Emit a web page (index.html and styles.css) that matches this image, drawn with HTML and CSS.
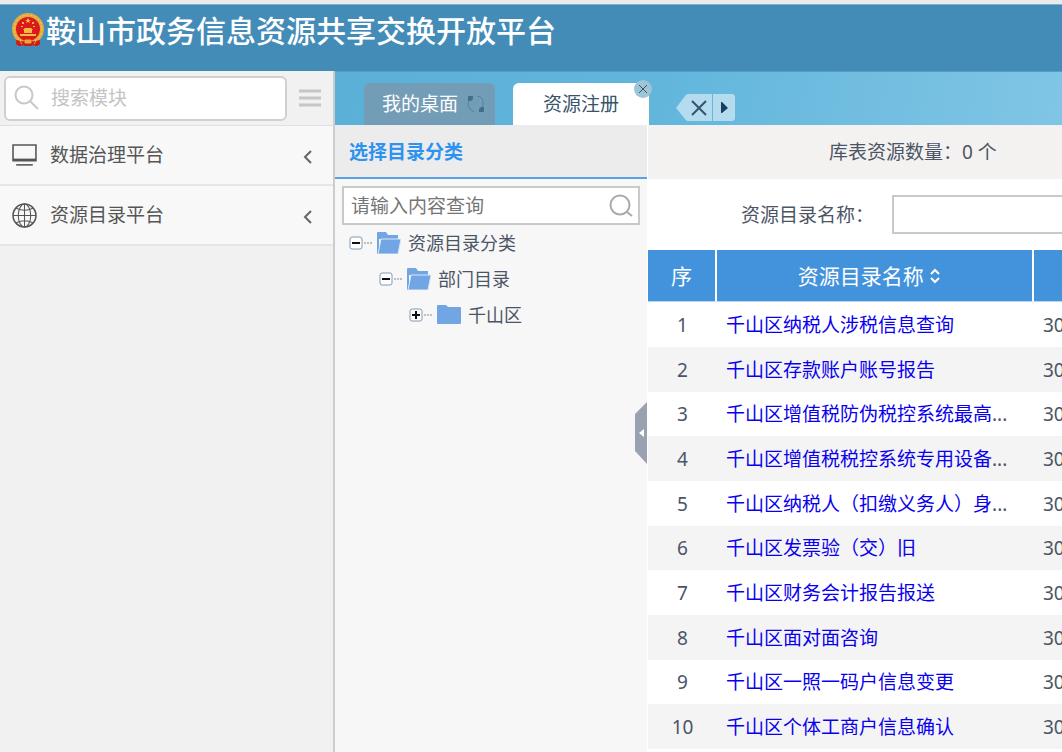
FILE: index.html
```html
<!DOCTYPE html>
<html lang="zh-CN">
<head>
<meta charset="utf-8">
<meta name="viewport" content="width=device-width, initial-scale=1">
<title>鞍山市政务信息资源共享交换开放平台</title>
<link rel="stylesheet" href="styles.css">
</head>
<body>
<div class="app">
  <header class="header">
    <svg class="emblem" viewBox="0 0 34 35" aria-hidden="true">
      <path d="M5 24h24v7l-3 2-4-1-2 1h-6l-2-1-4 1-3-2z" fill="#d3221c"/>
      <circle cx="17" cy="16" r="14" fill="#dc1a1c" stroke="#e3a93c" stroke-width="4"/>
      <circle cx="17" cy="16" r="14" fill="none" stroke="#f2cf6a" stroke-width="1" stroke-dasharray="2 2"/>
      <path d="M17 5l1 2h2l-2 1 1 2-2-1-2 1 1-2-2-1h2zM11 9h2v2h-2zM21 9h2v2h-2zM10 13h2v1h-2zM22 13h2v1h-2zM12 17l2-2h6l2 2zM13 17h8v3h-8zM9 21h16v2H9z" fill="#f3bd43"/>
      <path d="M6 27q5 2 8 1l3-2 3 2q3 1 8-1l1 4-3 2-4-1-2 1h-6l-2-1-4 1-3-2z" fill="#cf1b1d"/>
      <path d="M14 27h6v3h-6zM9 28l2 3M25 28l-2 3" fill="#e7a736" stroke="#e7a736"/>
    </svg>
    <h1 class="title">鞍山市政务信息资源共享交换开放平台</h1>
  </header>
  <div class="body">
    <aside class="sidebar">
      <div class="module-search">
        <label class="module-box">
          <svg class="module-icon" viewBox="0 0 26 26" aria-hidden="true"><circle cx="10" cy="10" r="8.500"/><path d="M16 16l8 8"/></svg>
          <input class="module-input" type="text" placeholder="搜索模块" aria-label="搜索模块">
        </label>
        <button class="menu-toggle" type="button" aria-label="折叠菜单"><svg class="menu-icon" viewBox="0 0 22 18"><path d="M0 2h22M0 9h22M0 16h22"/></svg></button>
      </div>
      <nav class="modules">
        <a class="module" href="#"><svg class="module-glyph" viewBox="0 0 24 24"><path d="M1 2h22v15H1z" stroke-width="1.500"/><path d="M1 16h22"/><path d="M4 21h16" stroke-width="1.500"/></svg><span class="module-name">数据治理平台</span><svg class="chevron" viewBox="0 0 10 14"><path d="M8 1L2 7l6 6"/></svg></a>
        <a class="module" href="#"><svg class="module-glyph thin" viewBox="0 0 24 24"><circle cx="12" cy="12" r="11" stroke-width="1.500"/><ellipse cx="12" cy="12" rx="6" ry="11"/><path d="M1 12h22M12 1v22M4 5q8 4 16 0M4 19q8-4 16 0"/></svg><span class="module-name">资源目录平台</span><svg class="chevron" viewBox="0 0 10 14"><path d="M8 1L2 7l6 6"/></svg></a>
      </nav>
    </aside>
    <main class="main">
      <div class="tabs">
        <button class="tab" type="button">我的桌面
          <svg class="refresh" viewBox="0 0 18 18" aria-hidden="true"><path d="M3 4Q-1 9 3 14l4 3M10 1q6 1 6 6v3q0 2-2 4"/><path class="solid" d="M1 1h5v3L4 6H1zM17 17h-5v-3l2-2h3z"/></svg>
        </button>
        <div class="tab-wrap">
          <button class="tab active" type="button">资源注册</button>
          <button class="tab-close" type="button" aria-label="关闭资源注册"><svg viewBox="0 0 18 18"><circle cx="9" cy="9" r="9"/><path d="M5 5l8 8M13 5l-8 8"/></svg></button>
        </div>
        <div class="tab-tools">
          <button class="tool close-all" type="button" aria-label="关闭全部"><svg viewBox="0 0 36 27"><path class="face" d="M0 14L9 2q1-2 3-2h24v27H12q-2 0-3-2z"/><path class="line" d="M16 7l14 14M30 7L16 21"/></svg></button>
          <button class="tool next" type="button" aria-label="下一个"><svg viewBox="0 0 22 27"><path class="face" d="M0 0h20l2 2v23l-2 2H0z"/><path class="arrow" d="M8 8h1l6 6-6 5H8z"/></svg></button>
        </div>
      </div>
      <div class="content">
        <section class="tree-panel">
          <h2 class="tree-title">选择目录分类</h2>
          <label class="tree-search">
            <input class="tree-input" type="text" placeholder="请输入内容查询" aria-label="请输入内容查询">
            <svg class="tree-search-icon" viewBox="0 0 24 24" aria-hidden="true"><circle cx="11" cy="11" r="9.500"/><path d="M18 18l5 4"/></svg>
          </label>
          <ul class="tree">
            <li><div class="node"><svg class="expander" viewBox="0 0 24 14"><rect x="1" y="1" width="12" height="12" rx="2"/><path class="sign" d="M3 7h8"/><path class="dots" d="M15 7h8"/></svg><svg class="folder" viewBox="0 0 24 22"><path d="M0 1q0-1 1-1h8l2 3h10v4H2v15H0z"/><path class="front" d="M4 7h20l-3 15H1z"/></svg>资源目录分类</div>
              <ul class="branch">
                <li><div class="node"><svg class="expander" viewBox="0 0 24 14"><rect x="1" y="1" width="12" height="12" rx="2"/><path class="sign" d="M3 7h8"/><path class="dots" d="M15 7h8"/></svg><svg class="folder" viewBox="0 0 24 22"><path d="M0 1q0-1 1-1h8l2 3h10v4H2v15H0z"/><path class="front" d="M4 7h20l-3 15H1z"/></svg>部门目录</div>
                  <ul class="branch">
                    <li><div class="node"><svg class="expander" viewBox="0 0 24 14"><rect x="1" y="1" width="12" height="12" rx="2"/><path class="sign" d="M3 7h8M7 3v8"/><path class="dots" d="M15 7h8"/></svg><svg class="folder" viewBox="0 0 24 22"><path d="M0 2q0-1 1-1h8l2 2h12q1 0 1 1v15q0 1-1 1H1q-1 0-1-1z"/></svg>千山区</div></li>
                  </ul>
                </li>
              </ul>
            </li>
          </ul>
          <button class="collapse" type="button" aria-label="收起目录"><svg viewBox="0 0 12 62"><path d="M12 0v62L0 49V12z" fill="#9aa2b1"/><path d="M9 27v8l-5-4z" fill="#fff"/></svg></button>
        </section>
        <section class="data-panel">
          <div class="summary">库表资源数量<span class="punct">：</span>0 个</div>
          <div class="filter"><label class="filter-label" for="catalog">资源目录名称<span class="punct">：</span></label><input class="filter-input" id="catalog" type="text"></div>
          <table class="grid">
            <thead><tr><th class="col-index">序</th><th class="col-name">资源目录名称 <svg class="sort" viewBox="0 0 12 16" aria-hidden="true"><path d="M2 6l4-4 4 4M2 10l4 4 4-4"/></svg></th><th></th></tr></thead>
            <tbody>
              <tr><td>1</td><td><a href="#">千山区纳税人涉税信息查询</a></td><td>30</td></tr>
              <tr><td>2</td><td><a href="#">千山区存款账户账号报告</a></td><td>30</td></tr>
              <tr><td>3</td><td><a href="#">千山区增值税防伪税控系统最高</a>...</td><td>30</td></tr>
              <tr><td>4</td><td><a href="#">千山区增值税税控系统专用设备</a>...</td><td>30</td></tr>
              <tr><td>5</td><td><a href="#">千山区纳税人<span class="punct">（</span>扣缴义务人<span class="punct">）</span>身</a>...</td><td>30</td></tr>
              <tr><td>6</td><td><a href="#">千山区发票验<span class="punct">（</span>交<span class="punct">）</span>旧</a></td><td>30</td></tr>
              <tr><td>7</td><td><a href="#">千山区财务会计报告报送</a></td><td>30</td></tr>
              <tr><td>8</td><td><a href="#">千山区面对面咨询</a></td><td>30</td></tr>
              <tr><td>9</td><td><a href="#">千山区一照一码户信息变更</a></td><td>30</td></tr>
              <tr><td>10</td><td><a href="#">千山区个体工商户信息确认</a></td><td>30</td></tr>
            </tbody>
          </table>
        </section>
      </div>
    </main>
  </div>
</div>
</body>
</html>
```

FILE: styles.css
```css
* { box-sizing: border-box; }

body {
  margin: 0;
  color: #4c5566;
  font-family: "Noto Sans", "Noto Sans CJK SC", sans-serif;
  font-size: 19px;
  line-height: 28px;
}

button, input { font: inherit; color: inherit; }
button { padding: 0; border: 0; background: none; cursor: pointer; }
svg { display: block; flex: none; fill: none; stroke-linecap: butt; }
ul { margin: 0; padding: 0; list-style: none; }

/* Full-width punctuation centred in its cell */
.punct { font-family: "Noto Sans CJK TC", sans-serif; line-height: 1; }

.app { display: flex; flex-direction: column; min-height: 100vh; border-top: 4px solid #ebebeb; }

.header {
  display: flex;
  align-items: flex-start;
  gap: 1px;
  height: 67px;
  padding: 8px 11px;
  background: #438cb8;
  border-top: 1px solid #7fb0cf;
}
.emblem { width: 34px; height: 35px; }
.title { margin: 0; color: #fff; font-size: 30px; font-weight: 500; line-height: 36px; white-space: nowrap; }

.body { display: flex; flex: 1; }

.sidebar { flex: none; width: 335px; background: #f1f1f1; border-right: 2px solid #cdcdcd; }
.module-search { display: flex; align-items: center; gap: 12px; height: 55px; padding: 0 4px; border-bottom: 1px solid #e0e0e0; }
.module-box { display: flex; align-items: center; gap: 11px; width: 283px; height: 45px; padding: 0 8px; background: #fff; border: 2px solid #d0d0d0; border-radius: 6px; }
.module-icon { width: 26px; height: 26px; stroke: #c8c8c8; stroke-width: 2; }
.module-input { flex: 1; min-width: 0; padding: 0; border: 0; outline: 0; background: none; }
.module-input::placeholder { color: #c4c4c4; opacity: 1; }
.menu-icon { width: 22px; height: 18px; stroke: #c6c6c6; stroke-width: 3; }
.module { display: flex; align-items: center; gap: 13px; height: 60px; padding: 0 20px 0 12px; color: #555; background: #f8f8f8; border-bottom: 2px solid #e6e6e6; text-decoration: none; }
.module-glyph { width: 25px; height: 25px; stroke: #555; stroke-width: 2; }
.thin { stroke-width: 1; }
.module-name { flex: 1; }
.chevron { width: 10px; height: 14px; margin-top: 4px; stroke: #666; stroke-width: 2; }

.main { display: flex; flex: 1; flex-direction: column; min-width: 0; }

.tabs { display: flex; align-items: flex-end; height: 54px; padding-left: 29px; background: linear-gradient(100deg, #5bb0d8, #62b6dc 45%, #80c5e5); border-top: 1px solid #529fc8; }
.tab { display: flex; align-items: center; gap: 9px; height: 42px; padding: 0 10px 0 18px; color: #fff; background: #739db7; border-radius: 6px 6px 0 0; white-space: nowrap; }
.refresh { width: 18px; height: 18px; stroke: #54819c; stroke-width: 1; }
.refresh .solid { fill: #41708f; stroke: none; }
.tab-wrap { position: relative; margin-left: 18px; }
.active { padding: 0 30px; color: #38536b; background: #fff; }
.tab-close { position: absolute; top: -3px; right: -3px; width: 18px; height: 18px; }
.tab-close svg { fill: #9fc4d5; stroke: #38536b; stroke-width: 1; }
.tab-close circle { stroke: none; }
.tab-tools { display: flex; gap: 1px; margin: 0 0 4px 27px; }
.tool svg { height: 27px; }
.close-all svg { width: 36px; }
.next svg { width: 22px; }
.face { fill: #b4dcee; }
.line { stroke: #36546f; stroke-width: 2; }
.arrow { fill: #173f61; }

.content { display: flex; flex: 1; }

.tree-panel { position: relative; flex: none; width: 312px; background: #f7f7f7; }
.tree-title { margin: 0; height: 54px; padding: 0 14px; color: #2d93ee; background: #ececec; border-bottom: 2px solid #56a3e8; font-size: 19px; font-weight: 700; line-height: 54px; }
.tree-search { display: flex; align-items: center; height: 39px; margin: 7px 7px 0; padding: 0 5px 0 7px; background: #fff; border: 2px solid #c9c9c9; }
.tree-input { flex: 1; min-width: 0; padding: 0; border: 0; outline: 0; background: none; }
.tree-input::placeholder { color: #757575; opacity: 1; }
.tree-search-icon { width: 24px; height: 24px; stroke: #aaa; stroke-width: 2; }
.tree { padding-left: 14px; font-size: 18px; line-height: 36px; }
.branch { padding-left: 30px; }
.node { display: flex; align-items: center; height: 36px; white-space: nowrap; }
.expander { width: 24px; height: 14px; }
.expander rect { fill: #fff; stroke: #809cb8; stroke-width: 1; }
.sign { stroke: #111; stroke-width: 2; }
.dots { stroke: #888; stroke-width: 1; stroke-dasharray: 2 1; }
.folder { width: 24px; height: 22px; margin: 0 7px 0 4px; fill: #71a5e3; }
.front { stroke: #dbe8f7; stroke-width: 1; }
.collapse { position: absolute; top: 277px; right: 0; width: 12px; height: 62px; }

.data-panel { flex: 1; min-width: 0; margin-left: 1px; overflow: hidden; background: #fff; }
.summary { height: 54px; padding-left: 181px; background: #f3f2f1; line-height: 54px; white-space: nowrap; }
.filter { display: flex; align-items: center; gap: 18px; height: 71px; padding-left: 93px; }
.filter-label { white-space: nowrap; }
.filter-input { flex: 1; min-width: 0; height: 39px; padding: 0 8px; border: 2px solid #c9c9c9; border-right: 0; background: #fff; }

.grid { width: 100%; table-layout: fixed; border-collapse: separate; border-spacing: 0; }
.grid th { height: 52px; padding: 0; color: #fff; background: #4393dc; border-right: 2px solid #fff; border-bottom: 1px solid #b5d5f1; font-size: 21px; font-weight: 400; }
.grid th:last-child { border-right: 0; }
.grid .col-index { width: 69px; }
.grid .col-name { width: 317px; padding-right: 10px; }
.sort { display: inline-block; width: 12px; height: 16px; stroke: #fff; stroke-width: 2; }
.grid td { height: 45px; padding: 0 9px; overflow: hidden; white-space: nowrap; }
.grid td:first-child { text-align: center; }
.grid tr:nth-child(3n) td { height: 44px; }
.grid tbody tr:nth-child(even) td { background: #f4f4f4; }
.grid a { color: #0a00ee; text-decoration: none; }
```
